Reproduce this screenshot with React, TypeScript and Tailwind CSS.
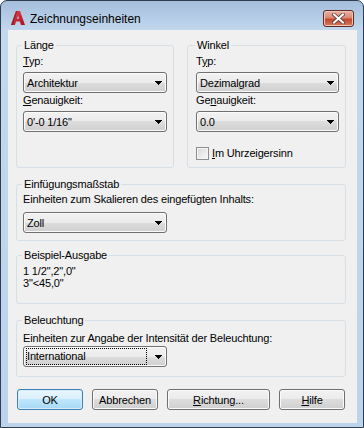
import React from 'react'

const face = "bg-[linear-gradient(to_bottom,#f2f2f2_0%,#ebebeb_50%,#dddddd_50%,#cfcfcf_100%)]"

function Arrow() {
  return (
    <svg width="7" height="4" viewBox="0 0 7 4" className="shrink-0">
      <path d="M0 0h7v1H0zM1 1h5v1H1zM2 2h3v1H2zM3 3h1v1H3z" fill="#000" />
    </svg>
  )
}

function Combo({ value, focused, className = '' }: { value: string; focused?: boolean; className?: string }) {
  return (
    <div
      className={`flex h-[21px] items-center rounded-[3px] border border-[#707070] ${face} shadow-[inset_0_0_0_1px_#fbfbfb] pr-[4px] ${focused ? 'pl-[2px]' : 'pl-[3px]'} ${className}`}
    >
      {focused ? (
        <span className="flex h-[17px] w-[121px] items-center border border-dotted border-black leading-[15px]">{value}</span>
      ) : (
        <span className="leading-[14px]">{value}</span>
      )}
      <span className="flex-1" />
      <Arrow />
    </div>
  )
}

function Group({ title, className = '', children }: { title: string; className?: string; children?: React.ReactNode }) {
  return (
    <div className={`flex flex-col rounded-[3px] border border-[#d5dfe5] ${className}`}>
      <div className="-mt-[8px] -ml-px w-fit bg-[#f0f0f0] px-[2px] leading-[14px]">{title}</div>
      {children}
    </div>
  )
}

function Button({ children, primary, className = '' }: { children: React.ReactNode; primary?: boolean; className?: string }) {
  return (
    <div
      className={`flex h-[21px] items-center justify-center rounded-[3px] border leading-[14px] ${
        primary
          ? 'border-[#3c7fb1] bg-[linear-gradient(to_bottom,#eaf6fd_0%,#d9f0fc_50%,#bee6fd_50%,#a7d9f5_100%)] shadow-[inset_0_0_0_1px_#d6eefb]'
          : `border-[#707070] ${face} shadow-[inset_0_0_0_1px_#fbfbfb]`
      } ${className}`}
    >
      {children}
    </div>
  )
}

function AcadLogo() {
  return (
    <svg width="16" height="16" viewBox="0 0 16 16">
      <defs>
        <linearGradient id="ag" x1="0" y1="0" x2="1" y2="1">
          <stop offset="0" stopColor="#e5484d" />
          <stop offset="1" stopColor="#a8111b" />
        </linearGradient>
      </defs>
      <path d="M1 15 L6 1 H10 L15 15 H11 L9.9 11.6 H6.1 L5 15 Z M7 8.8 H9 L8 5.6 Z" fill="url(#ag)" fillRule="evenodd" />
      <path d="M1 15 L6 1 H7.2 L3 15 Z" fill="#7d0c14" opacity="0.6" />
    </svg>
  )
}

function CloseButton() {
  return (
    <div className="flex h-[17px] w-[31px] items-center justify-center rounded-[3px] border border-[#5e2b25] bg-[linear-gradient(to_bottom,#eab1a4_0%,#d98874_45%,#c4462d_55%,#d67a63_100%)] shadow-[inset_0_0_0_1px_#f1c4b8]">
      <svg width="13" height="11" viewBox="0 0 13 11">
        <path d="M2 1.5 L11 9.5 M11 1.5 L2 9.5" stroke="#5b3a36" strokeWidth="3.6" strokeLinecap="square" />
        <path d="M2 1.5 L11 9.5 M11 1.5 L2 9.5" stroke="#ffffff" strokeWidth="2" strokeLinecap="square" />
      </svg>
    </div>
  )
}

export default function App() {
  return (
    <div className="h-[428px] w-[364px] bg-white font-['Liberation_Sans',Arial,sans-serif] text-[11px] text-black">
      <div className="flex h-full flex-col rounded-t-[7px] border border-[#2f3d4e] bg-[linear-gradient(to_bottom,#a4bedc_0px,#c3d8ee_30px,#bdd3eb_100%)]">
        {/* title bar */}
        <div className="flex h-[29px] shrink-0 items-start pl-[9px] pr-[9px] pt-[9px]">
          <AcadLogo />
          <span className="mt-[1px] ml-[4px] text-[12px] leading-[16px]">Zeichnungseinheiten</span>
          <span className="flex-1" />
          <CloseButton />
        </div>

        {/* client */}
        <div className="ml-[7px] mr-[6px] flex h-[393px] flex-col bg-[#f0f0f0] pl-[8px] pr-[11px] pt-[15px] tracking-[-0.16px]">
          <div className="flex gap-[13px]">
            <Group title="Länge" className="w-[158px] pl-[6px] pr-[6px] pb-[35px]">
              <div className="mt-[2px] leading-[14px]">
                <u>T</u>yp:
              </div>
              <Combo value="Architektur" className="mt-[4px]" />
              <div className="leading-[14px]">
                <u>G</u>enauigkeit:
              </div>
              <Combo value={'0\'-0 1/16"'} className="mt-[4px]" />
            </Group>
            <Group title="Winkel" className="w-[159px] pl-[8px] pr-[6px]">
              <div className="mt-[2px] leading-[14px]">
                T<u>y</u>p:
              </div>
              <Combo value="Dezimalgrad" className="mt-[4px]" />
              <div className="leading-[14px]">
                Ge<u>n</u>auigkeit:
              </div>
              <Combo value="0.0" className="mt-[4px]" />
              <div className="mt-[14px] flex items-center gap-[3px]">
                <span className="h-[13px] w-[13px] border border-[#8e8f8f] bg-[linear-gradient(135deg,#d8d8d8,#f9f9f9)] shadow-[inset_0_0_0_1px_#f4f4f4]" />
                <span className="leading-[14px]">
                  <u>I</u>m Uhrzeigersinn
                </span>
              </div>
            </Group>
          </div>

          <Group title="Einfügungsmaßstab" className="mt-[16px] pl-[6px] pb-[7px]">
            <div className="mt-[1px] leading-[14px]">Einheiten zum Skalieren des eingefügten Inhalts:</div>
            <Combo value="Zoll" className="mt-[6px] w-[144px]" />
          </Group>

          <Group title="Beispiel-Ausgabe" className="mt-[14px] pl-[6px] pb-[14px]">
            <div className="mt-[3px] leading-[12px]">1 1/2",2",0"</div>
            <div className="leading-[12px]">3"&lt;45,0"</div>
          </Group>

          <Group title="Beleuchtung" className="mt-[16px] pl-[6px] pb-[9px]">
            <div className="mt-[4px] leading-[14px]">Einheiten zur Angabe der Intensität der Beleuchtung:</div>
            <Combo value="International" focused className="mt-[1px] w-[144px]" />
          </Group>

          <div className="mt-[12px] flex gap-[9px] pl-[1px]">
            <Button primary className="w-[66px]">OK</Button>
            <Button className="w-[66px]">Abbrechen</Button>
            <Button className="w-[103px]">
              <span>
                <u>R</u>ichtung...
              </span>
            </Button>
            <Button className="w-[66px]">
              <span>
                <u>H</u>ilfe
              </span>
            </Button>
          </div>
        </div>
      </div>
    </div>
  )
}
